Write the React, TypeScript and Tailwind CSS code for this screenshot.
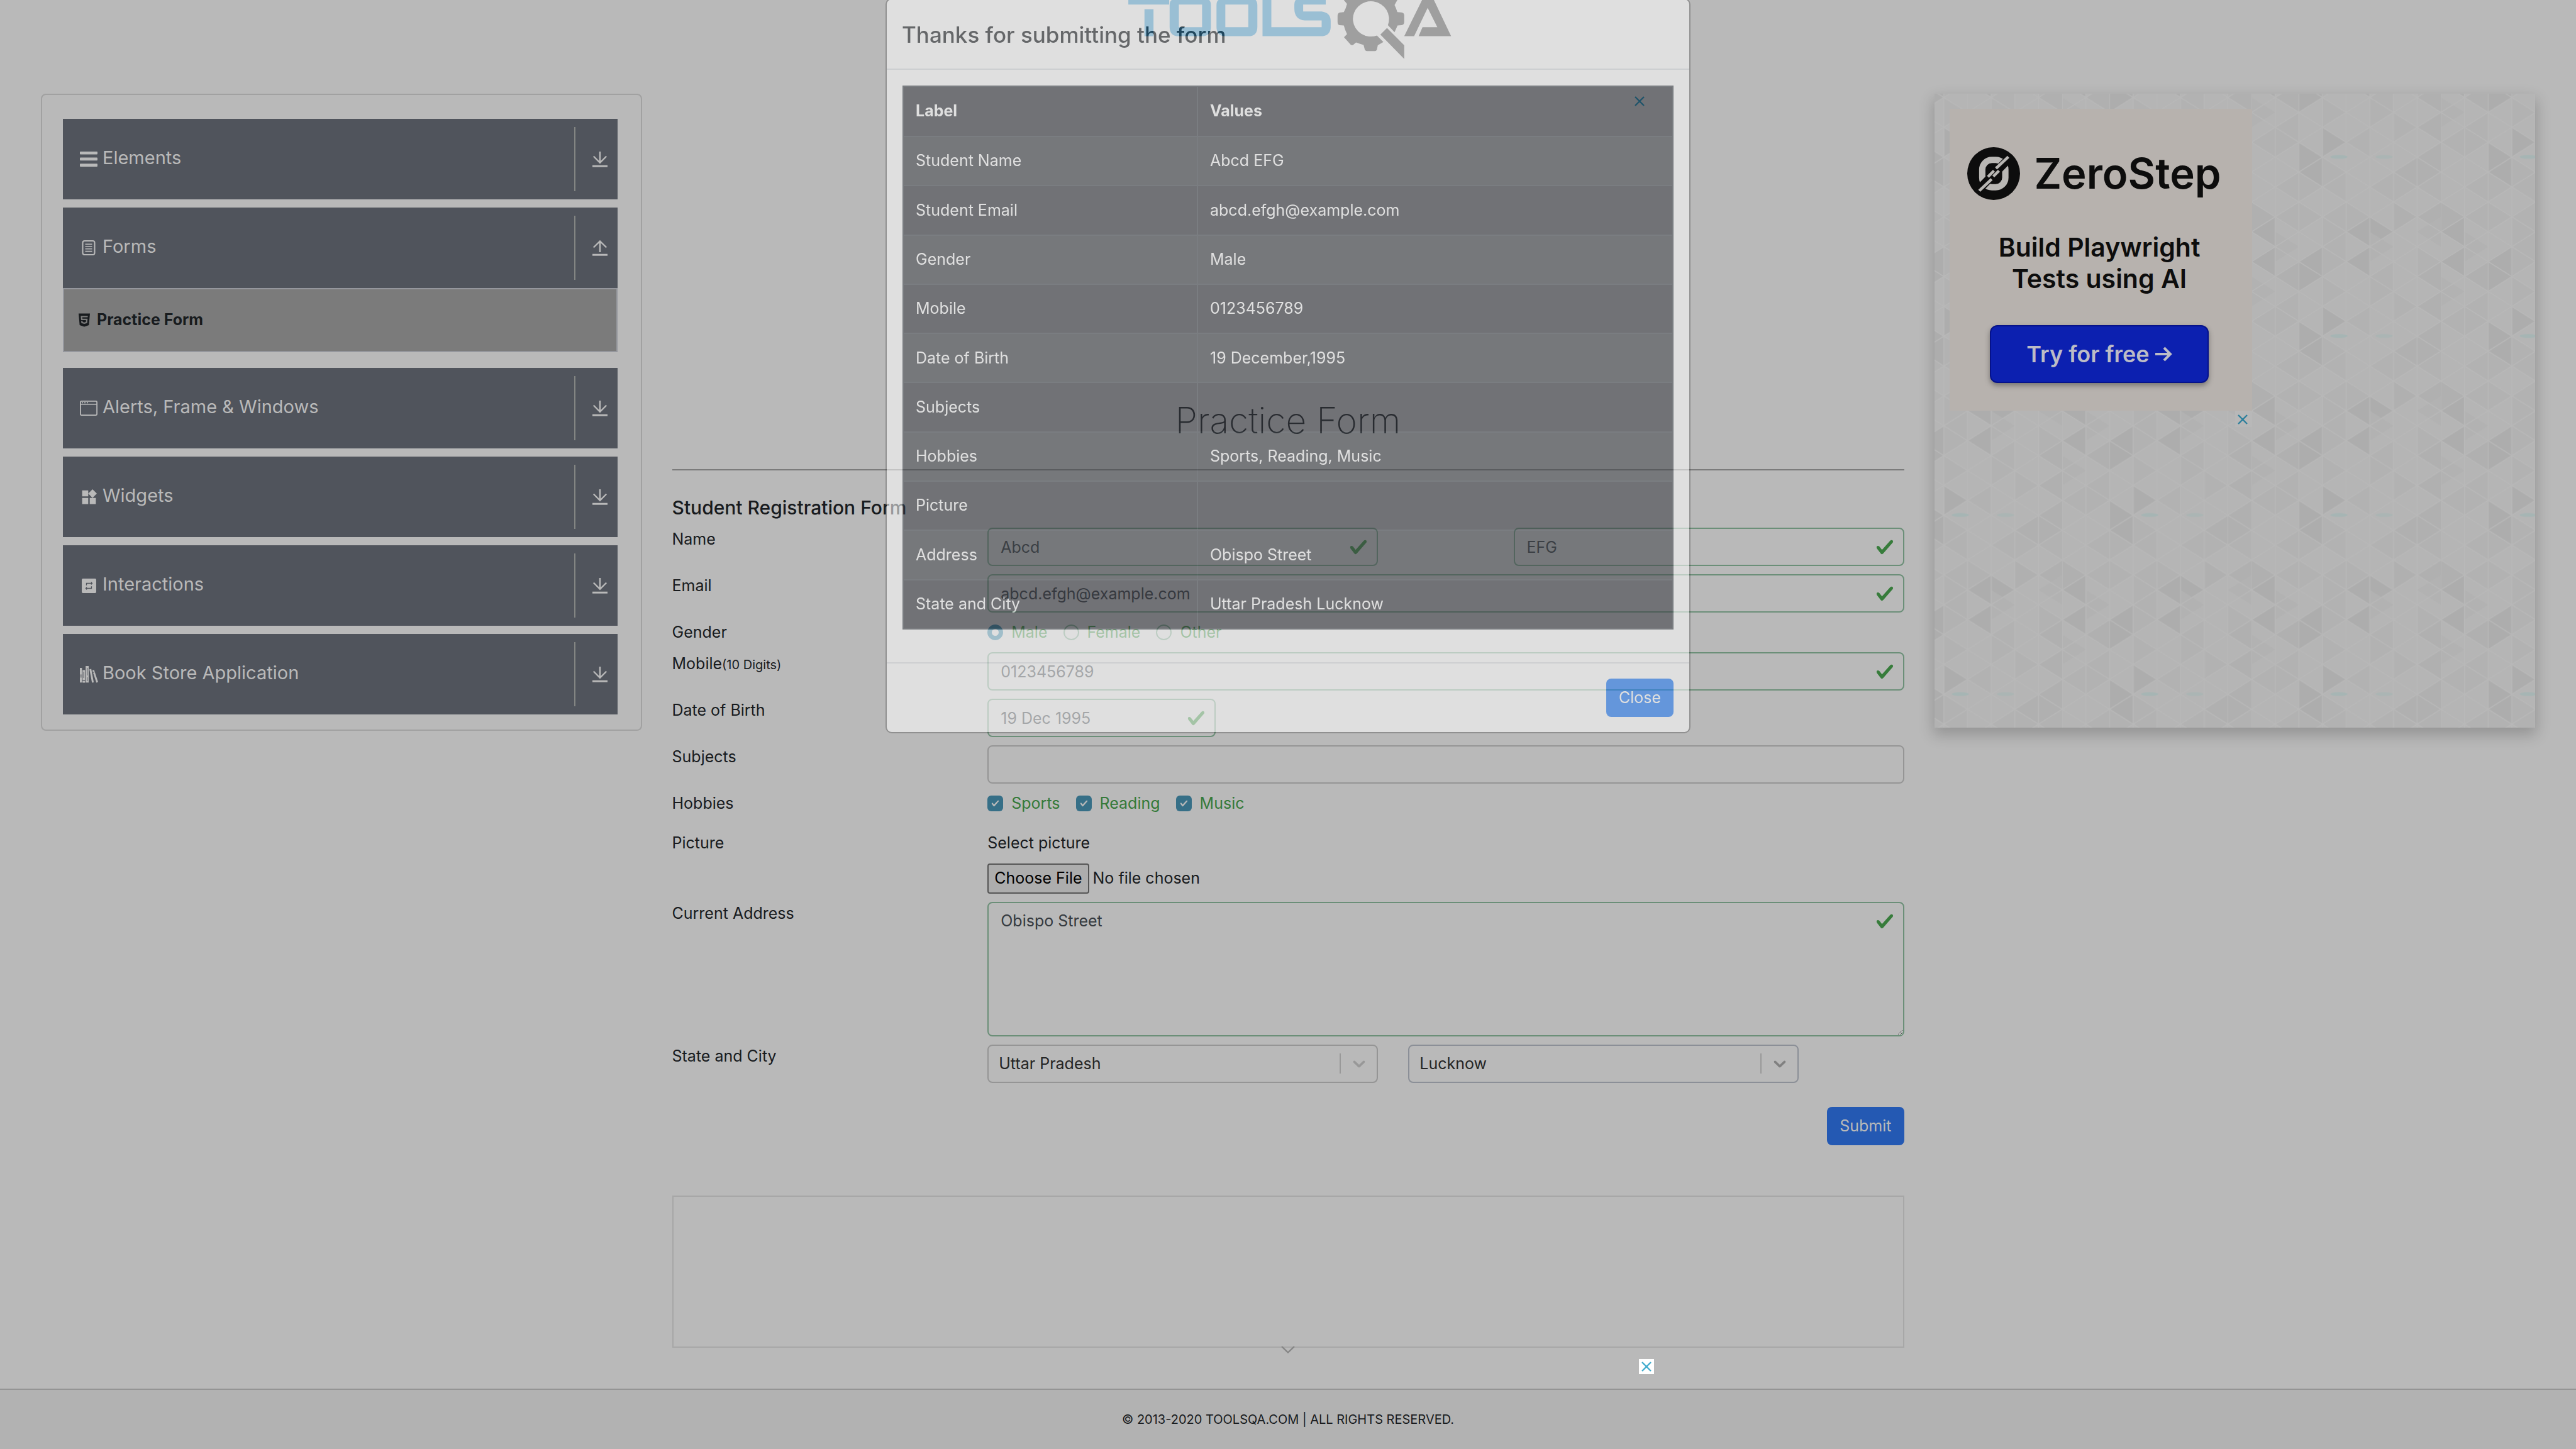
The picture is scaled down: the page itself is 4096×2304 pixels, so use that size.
import React from "react";
import { MdWidgets } from "react-icons/md";
import { FaHtml5 } from "react-icons/fa";

/* ---------- Icons ---------- */

const BarsIcon = () => (
  <svg viewBox="0 0 28 24" className="h-6 w-7" fill="currentColor" aria-hidden="true">
    <rect width="28" height="4.6" rx="1" />
    <rect y="9.6" width="28" height="4.6" rx="1" />
    <rect y="19.3" width="28" height="4.6" rx="1" />
  </svg>
);

const FormIcon = () => (
  <svg viewBox="0 0 28 24" className="h-6 w-7" fill="none" stroke="currentColor" aria-hidden="true">
    <rect x="4.5" y="1" width="19" height="22" rx="3" strokeWidth="2" />
    <path d="M8.500 6.200h11M8.500 10h11M8.500 13.800h11M8.500 17.600h11" strokeWidth="1.6" />
  </svg>
);

const WindowIcon = () => (
  <svg viewBox="0 0 28 24" className="h-6 w-7" fill="none" stroke="currentColor" aria-hidden="true">
    <rect x="0.900" y="0.900" width="26.200" height="22.200" rx="1.500" strokeWidth="1.8" />
    <path d="M1 5.800h26" strokeWidth="1.6" />
    <path d="M3 3.400h2M7 3.400h2M11 3.400h2" strokeWidth="1.6" />
  </svg>
);

const RepeatIcon = () => (
  <svg viewBox="0 0 24 24" className="size-[29px]" aria-hidden="true">
    <rect x="2.500" y="2.500" width="19" height="19" rx="1.500" fill="currentColor" />
    <path
      transform="translate(5.4 5.4) scale(0.55)"
      fill="#50545c"
      d="M7 7h10v3l4-4-4-4v3H5v6h2V7zm10 10H7v-3l-4 4 4 4v-3h12v-6h-2v4z"
    />
  </svg>
);

const BooksIcon = () => (
  <svg viewBox="0 0 29 27" className="h-[27px] w-[29px]" aria-hidden="true">
    <g fill="currentColor">
      <path d="M0 3h3.400v10.800H0zM0 15h3.400v1.800H0zM0 18h3.400v8.200H0z" />
      <path d="M4.300 6.500h3.900v15.700H4.300zM4.300 23.400h3.900v3H4.300z" />
      <path d="M9.200 0h4.800v26.300H9.200z" />
      <path d="M15.200 5.300l2.900-.7 4 21.300-2.900.6z" />
      <path d="M19.800 6.900l2.700-1 6.500 19.600-2.700 1z" />
    </g>
    <path d="M11.600 3v12M11.600 18v6M6.200 9v10M20.300 10.600l2.700-.9" stroke="#50545c" strokeWidth="1" fill="none" />
  </svg>
);

const ArrowIcon = ({ up }: { up?: boolean }) => (
  <svg viewBox="0 0 24 25" className="h-[25px] w-6" fill="none" stroke="currentColor" aria-hidden="true">
    {up ? (
      <path d="M12 19V1.500M1.800 11.500L12 1.500L22.200 11.500" strokeWidth="2.4" />
    ) : (
      <path d="M12 0V18M1.800 7.500L12 17.800L22.200 7.500" strokeWidth="2.4" />
    )}
    <path d="M0 23.200h24" strokeWidth="3" />
  </svg>
);

const CheckIcon = ({ className }: { className: string }) => (
  <svg viewBox="0 0 8 8" className={className} fill="currentColor" aria-hidden="true">
    <path d="M2.300 6.730L.6 4.530c-.4-1.040.46-1.400 1.100-.8l1.100 1.400 3.400-3.800c.6-.63 1.600-.27 1.200.7l-4 4.600c-.43.5-.8.4-1.100.1z" />
  </svg>
);

const CrossIcon = () => (
  <svg viewBox="0 0 24 24" className="size-6" fill="none" stroke="currentColor" strokeWidth="2.4" aria-hidden="true">
    <path d="M5 5L19 19M19 5L5 19" />
  </svg>
);

const ChevronIcon = () => (
  <svg viewBox="0 0 20 20" className="size-8" fill="currentColor" aria-hidden="true">
    <path d="M4.516 7.548c0.436-0.446 1.043-0.481 1.576 0l3.908 3.747 3.908-3.747c0.533-0.481 1.141-0.446 1.574 0 0.436 0.445 0.408 1.197 0 1.615-0.406 0.418-4.695 4.502-4.695 4.502-0.217 0.223-0.502 0.335-0.787 0.335s-0.570-0.112-0.789-0.335c0 0-4.287-4.084-4.695-4.502s-0.436-1.170 0-1.615z" />
  </svg>
);

const ToolsQaLogo = () => (
  <svg viewBox="-23 0 1591 390" preserveAspectRatio="none" className="h-[104px] w-[544px]" role="img" aria-label="ToolsQA">
    <g fill="#2171a0" fillRule="evenodd">
      <path d="M30 0H220V27H30Z" />
      <path d="M105 55H147V216H105Z" />
      <path d="M222 30C222 14 226 4 232 0H406C411 6 414 16 414 30V160Q414 216 372 216H264Q222 216 222 160ZM265 27V162H373V27Z" />
      <path d="M440 30C440 14 444 4 450 0H622C627 6 630 16 630 30V160Q630 216 588 216H482Q440 216 440 160ZM481 27V162H588V27Z" />
      <path d="M654 0H695V162H929V122H850Q802 118 802 50V25Q803 8 808 0H948V27H843V68H929Q971 75 971 125V165Q968 216 925 216H654Z" />
    </g>
    <g fill="#2a2a2a">
      <path d="M1032 0L1047 23Q1042 50 1032 72L1012 75Q1003 80 1003 95V130Q1003 148 1012 150L1032 152Q1038 180 1047 203L1033 222L1064 266Q1070 272 1076 267L1089 253Q1105 260 1124 268L1128 288Q1130 304 1140 305H1176Q1186 304 1187 290L1190 270Q1200 262 1216 250L1186 212A84 105 0 1 1 1237 150L1268 192L1282 152L1300 150Q1313 148 1313 130V92Q1313 76 1300 74L1281 72Q1276 50 1268 30L1281 0Z" />
      <path d="M1233 167L1313 270V352L1202 206Z" />
      <path d="M1396 0H1451L1531 216H1380L1398 162H1467L1422 47L1359 216H1313Z" />
    </g>
  </svg>
);

const ZeroStepMark = () => (
  <svg viewBox="24 40 316 316" className="size-[84px]" aria-hidden="true">
    <circle cx="182" cy="198" r="158" fill="#0d0d0d" />
    <rect x="114" y="116" width="138" height="164" rx="58" fill="none" stroke="#b9b7b4" strokeWidth="38" />
    <path d="M86 300L286 96" stroke="#0d0d0d" strokeWidth="50" />
    <g stroke="#b9b7b4" strokeWidth="17">
      <path d="M96 301L170 231" />
      <path d="M196 167L270 98" />
      <path d="M148 217L184 181" />
      <path d="M180 215L214 181" />
    </g>
  </svg>
);

/* ---------- Triangle backdrop of the side advertisement ---------- */

const COL = 115.25;
const HALF = 72.67;

type Tri = [col: number, step: number, dir: "l" | "r", tone: string];

const S = "#adadad";
const M = "#b0b0b0";
const F = "#b2b2b2";

const triangles: Tri[] = [
  [0, 0, "l", S], [2, 0, "l", S], [4, 0, "l", S], [0, 10, "l", S], [4, 10, "l", S], [2, 6, "l", S],
  [2, 1, "r", S], [3, 4, "r", S], [2, 5, "r", S], [5, 10, "r", S],
  [1, 1, "l", M], [7, 1, "l", M], [1, 3, "l", F], [7, 3, "l", M], [7, 5, "l", M], [6, 6, "l", M],
  [7, 6, "r", M], [6, 9, "r", M], [7, 9, "l", M], [0, 9, "r", M], [3, 0, "r", F], [6, 3, "r", F],
  [1, 9, "l", F], [3, 9, "l", F], [3, 7, "l", F], [1, 7, "l", F], [2, 7, "r", F], [1, 4, "r", F],
  [0, 4, "l", F], [2, 9, "r", F], [4, 9, "r", F], [3, 10, "r", F], [5, 7, "l", F], [6, 7, "r", F],
  [0, 2, "r", F], [5, 1, "l", F], [5, 2, "r", F], [3, 2, "r", F], [7, 0, "r", F], [5, 11, "r", F],
  [7, 10, "l", F], [1, 11, "r", F], [3, 11, "l", F], [4, 4, "l", F], [7, 7, "l", F], [3, 6, "r", F],
];

const points = (col: number, step: number, dir: "l" | "r") => {
  const x0 = col * COL;
  const x1 = x0 + COL;
  const y = step * HALF;
  return dir === "l"
    ? `${x0},${y} ${x1},${y - HALF} ${x1},${y + HALF}`
    : `${x1},${y} ${x0},${y - HALF} ${x0},${y + HALF}`;
};

const TriangleBackdrop = () => (
  <svg className="absolute inset-0 h-full w-full" aria-hidden="true">
    <defs>
      <pattern
        id="triangles"
        width="922"
        height="872"
        patternUnits="userSpaceOnUse"
        patternTransform="translate(203 267) scale(0.3265)"
      >
        <rect width="922" height="872" fill="#b5b5b5" />
        {triangles.map(([c, s, d, tone], i) => (
          <g key={i} fill={tone}>
            <polygon points={points(c, s, d)} />
            {s === 0 && <polygon points={points(c, 12, d)} />}
          </g>
        ))}
        <g stroke="#b8b8b8" strokeWidth="5" fill="none">
          {Array.from({ length: 8 }, (_, i) => (
            <path key={i} d={`M${i * COL} 0V872`} />
          ))}
          {Array.from({ length: 18 }, (_, k) => {
            const y = (k - 8) * 2 * HALF;
            return (
              <path key={k} d={`M0 ${y}L922 ${y + 8 * HALF}M0 ${y + 8 * HALF}L922 ${y}`} />
            );
          })}
        </g>
        <ellipse cx="426" cy="362" rx="42" ry="9" fill="#a6b5b4" />
        <ellipse cx="646" cy="362" rx="42" ry="9" fill="#abb5b4" />
      </pattern>
    </defs>
    <rect width="100%" height="100%" fill="url(#triangles)" />
  </svg>
);

/* ---------- Sidebar ---------- */

type MenuGroup = { title: string; icon: React.ReactNode; items?: string[] };

const menu: MenuGroup[] = [
  { title: "Elements", icon: <BarsIcon /> },
  { title: "Forms", icon: <FormIcon />, items: ["Practice Form"] },
  { title: "Alerts, Frame & Windows", icon: <WindowIcon /> },
  { title: "Widgets", icon: <MdWidgets size={29} /> },
  { title: "Interactions", icon: <RepeatIcon /> },
  { title: "Book Store Application", icon: <BooksIcon /> },
];

const Sidebar = () => (
  <nav className="rounded-lg border-2 border-[#a1a1a1] pt-[38px] pr-[37px] pb-6 pl-[33px]">
    <ul className="flex flex-col gap-[13px]">
      {menu.map(({ title, icon, items }) => (
        <li key={title}>
          <button
            type="button"
            aria-expanded={Boolean(items)}
            className="flex h-32 w-full items-center bg-[#50545c] pl-[27px] text-left text-[29px] leading-9 text-[#b9b9b9]"
          >
            <span className="flex w-9 shrink-0">{icon}</span>
            <span className="flex-1 pb-1">{title}</span>
            <span className="flex h-[102px] w-[69px] items-center border-l-2 border-[#838583] pl-[27px]">
              <ArrowIcon up={Boolean(items)} />
            </span>
          </button>
          {items && (
            <ul className="mb-3 border-2 border-[#95979d] bg-[#7b7b7b]">
              {items.map((item) => (
                <li key={item}>
                  <a href="#practice-form" className="flex h-[98px] items-center gap-2 pl-5 text-[25px] font-bold text-[#181b1e]">
                    <FaHtml5 size={24} />
                    {item}
                  </a>
                </li>
              ))}
            </ul>
          )}
        </li>
      ))}
    </ul>
  </nav>
);

/* ---------- Form ---------- */

const inputClass =
  "block h-[61px] w-full rounded-lg border-2 border-[#6b8f78] bg-transparent pr-14 pl-[19px] text-[25px] text-[#353a3f] outline-none";
const labelClass = "col-span-3 px-6 leading-[37px]";

const ValidInput = ({ id, label, value, type = "text" }: {
  id: string;
  label?: string;
  value: string;
  type?: string;
}) => (
  <div className="relative">
    <input id={id} aria-label={label} type={type} defaultValue={value} className={inputClass} />
    <CheckIcon className="absolute top-4 right-4 size-[30px] text-[#377c3b]" />
  </div>
);

const SelectBox = ({ id, label, value, focused }: { id: string; label: string; value: string; focused?: boolean }) => (
  <div className="relative">
    <select
      id={id}
      aria-label={label}
      defaultValue={value}
      className={
        focused
          ? "block h-[61px] w-full appearance-none rounded-lg border-2 border-[#8b8f97] bg-transparent pl-4 text-[25px] text-[#252525]"
          : "block h-[61px] w-full appearance-none rounded-lg border-2 border-[#959595] bg-transparent pl-4 text-[25px] text-[#252525]"
      }
    >
      <option>{value}</option>
    </select>
    <span
      className={
        focused
          ? "pointer-events-none absolute top-[14px] right-[14px] flex h-8 items-center border-l-2 border-[#999999] pl-[13px] text-[#808080]"
          : "pointer-events-none absolute top-[14px] right-[14px] flex h-8 items-center border-l-2 border-[#999999] pl-[13px] text-[#989898]"
      }
    >
      <ChevronIcon />
    </span>
  </div>
);

const genders = ["Male", "Female", "Other"];
const hobbies = ["Sports", "Reading", "Music"];

const RegistrationForm = () => (
  <form id="practice-form" onSubmit={(e) => e.preventDefault()} className="text-[25px] text-[#181b1e]">
    <h5 className="mt-10 px-6 text-[30px] leading-[38px] font-medium">Student Registration Form</h5>
    <div className="mt-[13px] flex flex-col gap-[13px]">
      <div className="grid grid-cols-12">
        <label htmlFor="firstName" className={labelClass}>Name</label>
        <div className="col-span-4 px-6"><ValidInput id="firstName" value="Abcd" /></div>
        <div className="col-span-4 col-start-9 px-6"><ValidInput id="lastName" label="Last Name" value="EFG" /></div>
      </div>
      <div className="grid grid-cols-12">
        <label htmlFor="email" className={labelClass}>Email</label>
        <div className="col-span-9 px-6"><ValidInput id="email" type="email" value="abcd.efgh@example.com" /></div>
      </div>
      <div className="grid grid-cols-12" role="radiogroup" aria-labelledby="gender">
        <span id="gender" className={labelClass}>Gender</span>
        <div className="col-span-9 flex items-center gap-[25px] px-6 text-[#357a39]">
          {genders.map((g) => (
            <label key={g} className="flex items-center gap-[13px] leading-[37px]">
              <input
                type="radio"
                name="gender"
                defaultChecked={g === "Male"}
                className="size-[25px] appearance-none rounded-full border-2 border-[#6b8f78] checked:border-[7px] checked:border-[#2e6f8b]"
              />
              {g}
            </label>
          ))}
        </div>
      </div>
      <div className="grid grid-cols-12">
        <label htmlFor="mobile" className={labelClass}>
          Mobile<small className="text-xl leading-none">(10 Digits)</small>
        </label>
        <div className="col-span-9 px-6"><ValidInput id="mobile" value="0123456789" /></div>
      </div>
      <div className="grid grid-cols-12">
        <label htmlFor="dob" className={labelClass}>Date of Birth</label>
        <div className="col-span-9 px-6">
          <div className="max-w-[363px]"><ValidInput id="dob" value="19 Dec 1995" /></div>
        </div>
      </div>
      <div className="grid grid-cols-12">
        <label htmlFor="subjects" className={labelClass}>Subjects</label>
        <div className="col-span-9 px-6">
          <input id="subjects" className="block h-[61px] w-full rounded-lg border-2 border-[#959595] bg-transparent px-5 text-[25px] outline-none" />
        </div>
      </div>
      <div className="grid h-[50px] grid-cols-12" role="group" aria-labelledby="hobbies">
        <span id="hobbies" className={labelClass}>Hobbies</span>
        <div className="col-span-9 flex h-[37px] items-center gap-[25px] px-6 text-[#357a39]">
          {hobbies.map((h) => (
            <label key={h} className="flex items-center gap-[13px] leading-[37px]">
              <span className="relative flex">
                <input type="checkbox" defaultChecked className="size-[25px] appearance-none rounded-md bg-[#366f87]" />
                <CheckIcon className="pointer-events-none absolute top-[6px] left-[6px] size-[13px] text-[#b9b9b9]" />
              </span>
              {h}
            </label>
          ))}
        </div>
      </div>
      <div className="grid grid-cols-12">
        <span className={labelClass}>Picture</span>
        <div className="col-span-9 flex flex-col gap-[14px] px-6">
          <label htmlFor="picture" className="leading-[37px]">Select picture</label>
          <input
            id="picture"
            type="file"
            className="block h-12 w-full text-[25px] file:mr-1.5 file:h-12 file:rounded-[4px] file:border-2 file:border-solid file:border-[#555555] file:bg-[#adadad] file:px-[9px] file:text-[25px] file:text-black"
          />
        </div>
      </div>
      <div className="grid grid-cols-12">
        <label htmlFor="address" className={labelClass}>Current Address</label>
        <div className="relative col-span-9 px-6">
          <textarea
            id="address"
            defaultValue="Obispo Street"
            className="block h-[214px] w-full rounded-lg border-2 border-[#6b8f78] bg-transparent py-[9px] pr-14 pl-[19px] text-[25px] leading-[38px] text-[#353a3f] outline-none"
          />
          <CheckIcon className="absolute top-4 right-10 size-[30px] text-[#377c3b]" />
        </div>
      </div>
      <div className="grid grid-cols-12">
        <span className={labelClass}>State and City</span>
        <div className="col-span-4 px-6"><SelectBox id="state" label="State" value="Uttar Pradesh" /></div>
        <div className="col-span-4 px-6"><SelectBox id="city" label="City" value="Lucknow" focused /></div>
      </div>
    </div>
    <div className="mt-[38px] flex justify-end px-6">
      <button type="submit" className="h-[61px] rounded-lg bg-[#2459b3] px-5 text-[25px] text-[#b9b9b9]">Submit</button>
    </div>
  </form>
);

/* ---------- Advertisement ---------- */

const SideAd = () => (
  <aside className="relative h-[1008px] p-6 shadow-[0_10px_22px_2px_rgba(0,0,0,0.2)]">
    <TriangleBackdrop />
    <div className="relative max-w-[481px]">
      <div className="flex h-[480px] flex-col items-center bg-[#b7b2ae] pt-[61px] pr-1 font-semibold text-[#0d0d0d]">
        <div className="flex items-center gap-[22px] pr-4">
          <ZeroStepMark />
          <span className="text-[67px] leading-[84px]">ZeroStep</span>
        </div>
        <p className="mt-[50px] text-center text-[41px] leading-[50px]">
          Build Playwright
          <br />
          Tests using AI
        </p>
        <a
          href="#try"
          className="mt-[49px] flex h-[92px] w-[348px] items-center justify-center gap-2 rounded-xl border-2 border-[#06128a] bg-[#0c20b0] text-[36px] text-[#bcbcc6] shadow-[0_4px_8px_rgba(0,0,0,0.35)]"
        >
          Try for free
          <svg viewBox="0 0 28 28" className="size-7" fill="none" stroke="currentColor" strokeWidth="4" aria-hidden="true">
            <path d="M1 14H25M15 4L25 14L15 24" />
          </svg>
        </a>
      </div>
      <button type="button" aria-label="Close ad" className="ml-auto block h-[26px] bg-[#b8b8b8] pt-0.5 pr-[3px] text-[#2b7f9c]">
        <CrossIcon />
      </button>
    </div>
  </aside>
);

/* ---------- Result dialog ---------- */

const results: [string, string][] = [
  ["Student Name", "Abcd EFG"],
  ["Student Email", "abcd.efgh@example.com"],
  ["Gender", "Male"],
  ["Mobile", "0123456789"],
  ["Date of Birth", "19 December,1995"],
  ["Subjects", ""],
  ["Hobbies", "Sports, Reading, Music"],
  ["Picture", ""],
  ["Address", "Obispo Street"],
  ["State and City", "Uttar Pradesh Lucknow"],
];

const ResultDialog = () => (
  <div className="fixed inset-0 flex items-start justify-center">
    <div
      role="dialog"
      aria-labelledby="dialog-title"
      className="-mt-[3px] w-full max-w-[1280px] rounded-[10px] border-2 border-black/40 bg-white bg-clip-padding text-[25px] text-[#212529] opacity-55"
    >
      <div className="flex h-[112px] items-center border-b-2 border-[#dee2e6] px-6 pt-0.5">
        <h4 id="dialog-title" className="text-[35px] leading-[58px] font-medium">Thanks for submitting the form</h4>
      </div>
      <div className="px-[25px] pt-[25px] pb-[52px]">
        <table className="h-[865px] w-full table-fixed border-collapse bg-[#373a40] text-left text-white">
          <thead>
            <tr className="h-20">
              <th className="w-[468px] border-2 border-[#484d54] px-[19px] font-bold">Label</th>
              <th className="border-2 border-[#484d54] px-[19px] font-bold">Values</th>
            </tr>
          </thead>
          <tbody>
            {results.map(([label, value]) => (
              <tr key={label} className="h-[78px] odd:bg-white/5">
                <td className="border-2 border-[#484d54] px-[19px]">{label}</td>
                <td className="border-2 border-[#484d54] px-[19px]">{value}</td>
              </tr>
            ))}
          </tbody>
        </table>
      </div>
      <div className="flex justify-end border-t-2 border-[#dee2e6] px-[25px] py-6">
        <button type="button" className="h-[61px] rounded-lg bg-[#1f7af7] px-5 text-[25px] text-white">Close</button>
      </div>
    </div>
  </div>
);

/* ---------- Page ---------- */

export default function App() {
  return (
    <div className="flex min-h-screen flex-col bg-[#b9b9b9] font-['Inter','Liberation_Sans',sans-serif] text-[#181b1e]">
      <header className="flex h-[149px] items-start justify-center">
        <ToolsQaLogo />
      </header>
      <main className="grid grid-cols-4 items-start px-[41px]">
        <div className="px-6"><Sidebar /></div>
        <div className="col-span-2">
          <div className="mx-auto flex h-[481px] max-w-[1142px] items-start justify-end">
            <button type="button" aria-label="Close banner" className="text-[#02749b]"><CrossIcon /></button>
          </div>
          <h1 className="text-center text-[57px] leading-[77px] font-extralight">Practice Form</h1>
          <hr className="mx-6 mt-[39px] border-t-2 border-[#7b7b7b]" />
          <RegistrationForm />
          <div className="px-6">
            <div className="relative mt-20 h-[242px] border-2 border-[#a7a7a7]">
              <svg viewBox="0 0 22 12" className="absolute -bottom-[11px] left-1/2 h-3 w-[22px] -translate-x-1/2" fill="none" stroke="#858585" strokeWidth="2.4" aria-hidden="true">
                <path d="M1 1L11 10.500L21 1" />
              </svg>
            </div>
            <div className="mx-auto mt-[18px] flex max-w-[1164px] justify-end">
              <button type="button" aria-label="Close ad" className="bg-white text-[#3fabcd]"><CrossIcon /></button>
            </div>
          </div>
        </div>
        <div className="px-6"><SideAd /></div>
      </main>
      <footer className="mt-auto flex h-24 items-center justify-center border-t-2 border-[#949494] bg-[#b2b2b2] text-xl">
        © 2013-2020 TOOLSQA.COM | ALL RIGHTS RESERVED.
      </footer>
      <ResultDialog />
    </div>
  );
}
